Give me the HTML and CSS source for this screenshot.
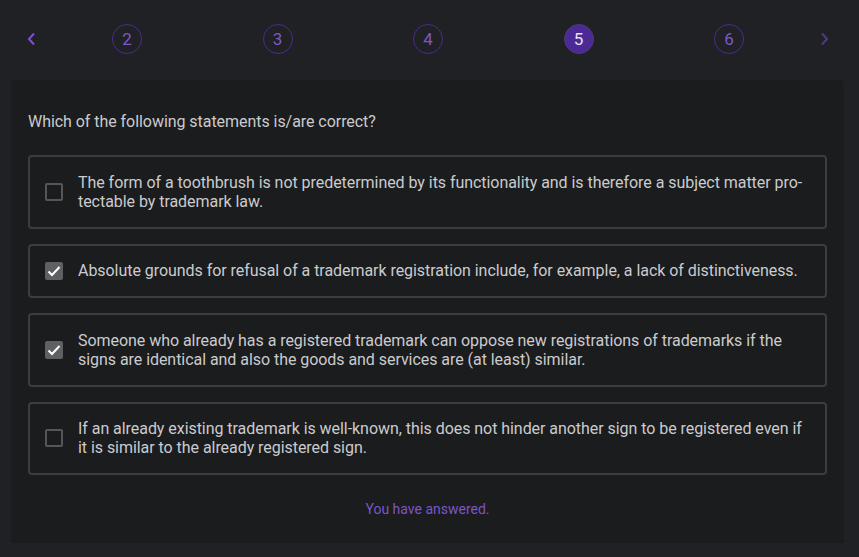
FILE: index.html
```html
<!DOCTYPE html>
<html lang="en">
<head>
<meta charset="utf-8">
<link rel="stylesheet" href="styles.css">
</head>
<body>
<nav class="steps">
  <span class="chev chev-prev"><svg width="10" height="14" viewBox="0 0 10 14"><polyline points="7,1.5 2,7 7,12.5" fill="none" stroke="currentColor" stroke-width="2"/></svg></span>
  <span class="step">2</span>
  <span class="step">3</span>
  <span class="step">4</span>
  <span class="step active">5</span>
  <span class="step last">6</span>
  <span class="chev chev-next"><svg width="10" height="14" viewBox="0 0 10 14"><polyline points="3,1.5 8,7 3,12.5" fill="none" stroke="currentColor" stroke-width="2"/></svg></span>
</nav>
<main class="card">
  <p class="question">Which of the following statements is/are correct?</p>
  <div class="options">
    <label class="option"><span class="box"></span><span class="text">The form of a toothbrush is not predetermined by its functionality and is therefore a subject matter pro&shy;tectable by trademark law.</span></label>
    <label class="option"><span class="box checked"><svg width="14" height="14" viewBox="0 0 14 14"><polyline points="1.5,7.5 5,11 12.5,3" fill="none" stroke="#fff" stroke-width="2"/></svg></span><span class="text">Absolute grounds for refusal of a trademark registration include, for example, a lack of distinctiveness.</span></label>
    <label class="option"><span class="box checked"><svg width="14" height="14" viewBox="0 0 14 14"><polyline points="1.5,7.5 5,11 12.5,3" fill="none" stroke="#fff" stroke-width="2"/></svg></span><span class="text">Someone who already has a registered trademark can oppose new registrations of trademarks if the signs are identical and also the goods and services are (at least) similar.</span></label>
    <label class="option"><span class="box"></span><span class="text">If an already existing trademark is well-known, this does not hinder another sign to be registered even if it is similar to the already registered sign.</span></label>
  </div>
  <p class="status">You have answered.</p>
</main>
</body>
</html>
```
FILE: styles.css
```css
html, body {
  margin: 0;
  padding: 0;
  background: #202124;
  font-family: Roboto, "Liberation Sans", sans-serif;
  color: #cacbcd;
}
.steps {
  display: flex;
  align-items: center;
  height: 80px;
  padding-left: 24px;
  box-sizing: border-box;
}
.chev {
  width: 16px;
  height: 14px;
  display: flex;
  justify-content: center;
  align-items: center;
}
.chev-prev { color: #7b52d6; margin-right: 72px; margin-top: -2px; }
.chev-next { color: #4f3a86; margin-left: 72px; margin-top: -2px; }
.step {
  width: 30px;
  height: 30px;
  box-sizing: border-box;
  border-radius: 50%;
  border: 1px solid #4a2b8c;
  color: #7c58cb;
  font-size: 17px;
  display: flex;
  align-items: center;
  justify-content: center;
  margin-right: 120.5px;
  margin-top: -2px;
}
.step.last { margin-right: 0; }
.step.active {
  background: #4c2a95;
  border-color: #4d3a72;
  color: #e6e0f2;
}
.card {
  display: block;
  margin: 0 16px 0 12px;
  background: #1b1c1e;
  border-radius: 4px;
  padding: 32px 16px 25px 16px;
  height: 463px;
  box-sizing: border-box;
  box-shadow: 0 1px 2px rgba(0,0,0,0.35);
}
.question {
  margin: 0 0 24px 0;
  font-size: 16px;
  line-height: 19px;
  letter-spacing: -0.05px;
  color: #cacbcd;
}
.options {
  display: flex;
  flex-direction: column;
  gap: 15px;
}
.option {
  display: flex;
  align-items: center;
  gap: 15px;
  border: 2px solid #3c3d40;
  border-radius: 4px;
  padding: 15.75px 16px 15.75px 15px;
  font-size: 16px;
  line-height: 19px;
  letter-spacing: -0.05px;
  color: #cacbcd;
}
.box {
  flex: none;
  width: 18px;
  height: 18px;
  box-sizing: border-box;
  border: 2px solid #54565a;
  border-radius: 2px;
  display: flex;
  align-items: center;
  justify-content: center;
}
.box.checked {
  background: #5e6064;
  border-color: #5e6064;
}
.text { flex: 1; }
.status {
  margin: 26px 0 0 0;
  text-align: center;
  font-size: 14px;
  line-height: 17px;
  color: #7a56c8;
}
```
